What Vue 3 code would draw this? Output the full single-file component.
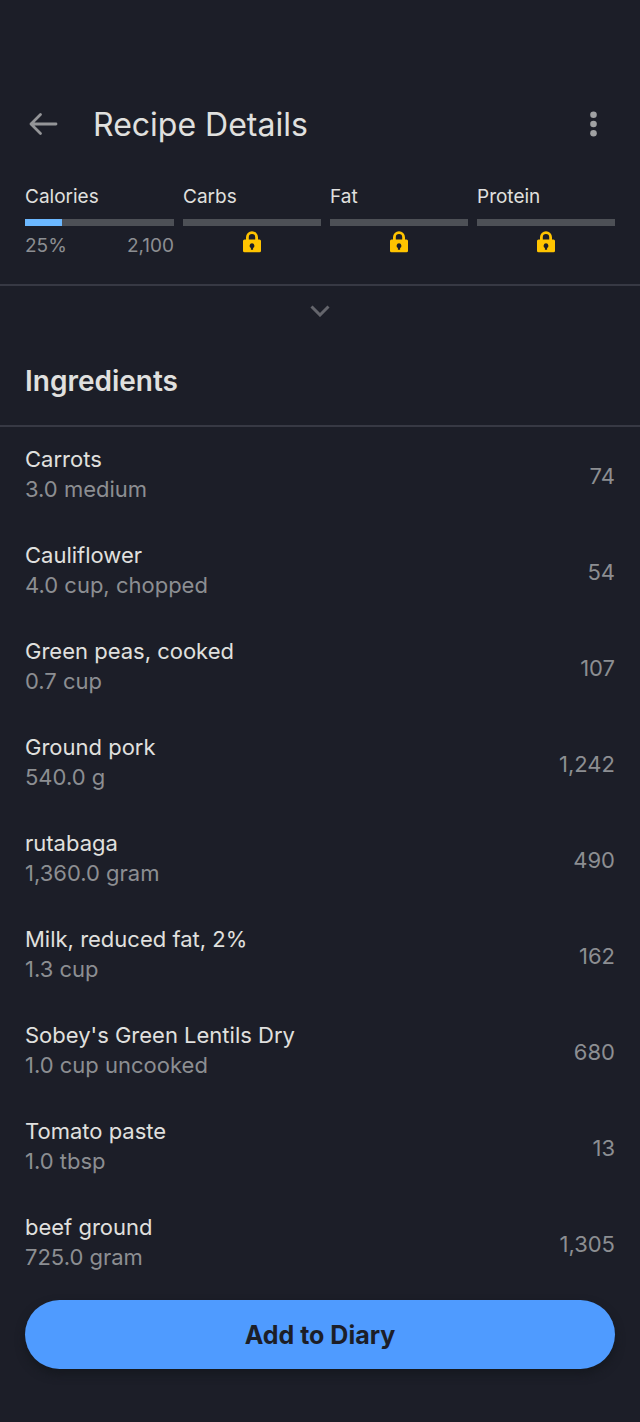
<script setup>
const macros = ['Carbs', 'Fat', 'Protein']
const ingredients = [
  { name: 'Carrots', amount: '3.0 medium', calories: '74' },
  { name: 'Cauliflower', amount: '4.0 cup, chopped', calories: '54' },
  { name: 'Green peas, cooked', amount: '0.7 cup', calories: '107' },
  { name: 'Ground pork', amount: '540.0 g', calories: '1,242' },
  { name: 'rutabaga', amount: '1,360.0 gram', calories: '490' },
  { name: 'Milk, reduced fat, 2%', amount: '1.3 cup', calories: '162' },
  { name: "Sobey's Green Lentils Dry", amount: '1.0 cup uncooked', calories: '680' },
  { name: 'Tomato paste', amount: '1.0 tbsp', calories: '13' },
  { name: 'beef ground', amount: '725.0 gram', calories: '1,305' },
]
const percent = 25
</script>

<template>
  <main class="screen">
    <header class="bar">
      <button class="icon" type="button" aria-label="Back">
        <svg width="32" height="32" viewBox="0 0 32 32" fill="none" stroke="#949598" stroke-width="2.8" stroke-linecap="round" stroke-linejoin="round">
          <path d="M29 16H4M13.500 6.500L4 16l9.500 9.500" />
        </svg>
      </button>
      <h1>Recipe Details</h1>
      <button class="icon" type="button" aria-label="More options">
        <svg width="32" height="32" viewBox="0 0 32 32" fill="#a0a1a3">
          <circle cx="16.500" cy="6.700" r="3.300" /><circle cx="16.500" cy="16" r="3.300" /><circle cx="16.500" cy="25.300" r="3.300" />
        </svg>
      </button>
    </header>

    <section class="goals">
      <div class="goal calories">
        <span class="label">Calories</span>
        <div class="track"><div class="fill" :style="{ width: percent + '%' }"></div></div>
        <div class="values"><span>{{ percent }}%</span><span>2,100</span></div>
      </div>
      <div v-for="macro in macros" :key="macro" class="goal">
        <span class="label">{{ macro }}</span>
        <div class="track"></div>
        <svg class="lock" width="20" height="22" viewBox="0 0 20 22">
          <path fill="none" stroke="#ffc400" stroke-width="2.800" d="M5.400 9V6.200a4.600 4.600 0 0 1 9.200 0V9" />
          <rect x="1" y="8.500" width="18" height="12.700" rx="1.500" fill="#ffc400" />
          <path fill="#1c1e28" d="M10 12.200a2.500 2.500 0 0 1 1.100 4.700V18.700H8.900V16.900A2.500 2.500 0 0 1 10 12.200z" />
        </svg>
      </div>
    </section>

    <button class="expand" type="button" aria-label="Show more">
      <svg width="20" height="12" viewBox="0 0 20 12" fill="none" stroke="#64656c" stroke-width="3"><path d="M1.500 1.500l8.500 8.500 8.500-8.500" /></svg>
    </button>

    <h2>Ingredients</h2>
    <ul>
      <li v-for="item in ingredients" :key="item.name">
        <div class="food">
          <div class="name">{{ item.name }}</div>
          <div class="amount">{{ item.amount }}</div>
        </div>
        <span class="count">{{ item.calories }}</span>
      </li>
    </ul>

    <footer><button class="add" type="button">Add to Diary</button></footer>
  </main>
</template>

<style>
body { background: #1c1e28; }
</style>

<style scoped>
.screen { box-sizing: border-box; min-height: 100vh; padding-top: 80px; background: #1c1e28; color: #e0e0df; font-family: Inter, "Liberation Sans", sans-serif; }
button { border: 0; padding: 0; background: none; font-family: inherit; cursor: pointer; }
svg { display: block; }
.bar { display: flex; align-items: center; height: 88px; padding: 0 31px 0 27px; }
.icon { width: 32px; height: 32px; }
h1 { flex: 1; margin: 0; padding: 2px 0 0 34px; font-size: 32px; line-height: 40px; font-weight: 400; }
.goals { display: flex; gap: 9px; padding: 17px 25px 26px; border-bottom: 2px solid #373944; }
.goal { flex: 138; }
.calories { flex: 149; }
.label { display: block; font-size: 19px; line-height: 24px; }
.track { height: 7px; margin-top: 10px; background: #4d5056; }
.fill { height: 7px; background: #6cb8ff; }
.values { display: flex; justify-content: space-between; margin-top: 8px; font-size: 19px; line-height: 24px; color: #8c8e92; }
.lock { margin: 5px auto 0; }
.expand { display: flex; justify-content: center; align-items: center; width: 100%; height: 50px; }
h2 { margin: 0; padding: 27px 25px 26px; font-size: 28px; line-height: 36px; font-weight: 600; border-bottom: 2px solid #373944; }
ul { margin: 0; padding: 1px 0 0; list-style: none; }
li { box-sizing: border-box; display: flex; align-items: center; justify-content: space-between; height: 96px; padding: 0 25px; }
.name, .amount, .count { font-size: 22px; line-height: 30px; }
.food { padding-bottom: 4px; }
.amount, .count { color: #8c8e92; }
footer { padding: 8px 25px 53px; }
.add { display: block; width: 100%; height: 69px; border-radius: 35px; background: #4f9bff; color: #1c1e28; font-size: 25px; line-height: 32px; font-weight: 700; box-shadow: 0 5px 10px #15181f; }
</style>
